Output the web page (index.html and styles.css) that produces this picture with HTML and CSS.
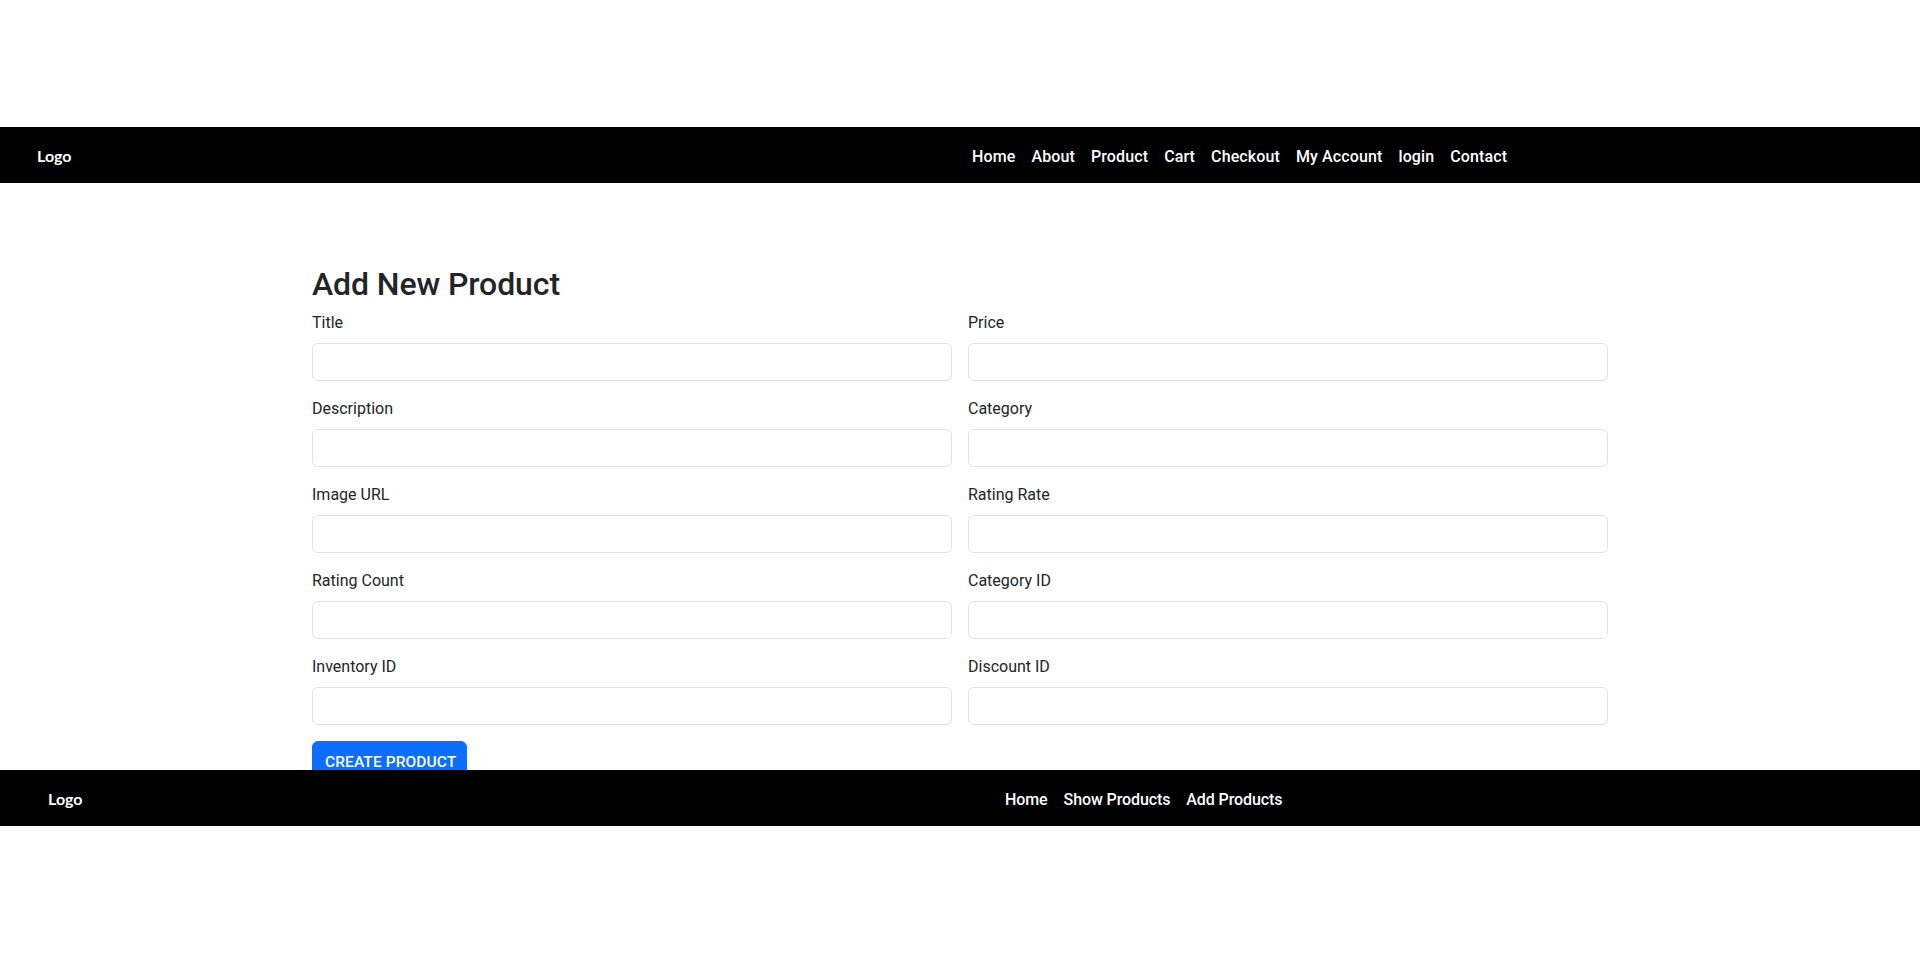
FILE: index.html
```html
<!DOCTYPE html>
<html lang="en">
<head>
<meta charset="utf-8">
<title>Add New Product</title>
<link rel="stylesheet" href="styles.css">
</head>
<body>
<div class="top-space"></div>
<header class="bar header">
  <div class="brand">Logo</div>
  <nav class="nav">
    <a href="#">Home</a>
    <a href="#">About</a>
    <a href="#">Product</a>
    <a href="#">Cart</a>
    <a href="#">Checkout</a>
    <a href="#">My Account</a>
    <a href="#">login</a>
    <a href="#">Contact</a>
  </nav>
</header>
<main class="main">
  <div class="container">
    <h2 class="title">Add New Product</h2>
    <form class="form">
      <div class="grid">
        <div class="field"><label>Title</label><input type="text"></div>
        <div class="field"><label>Price</label><input type="text"></div>
        <div class="field"><label>Description</label><input type="text"></div>
        <div class="field"><label>Category</label><input type="text"></div>
        <div class="field"><label>Image URL</label><input type="text"></div>
        <div class="field"><label>Rating Rate</label><input type="text"></div>
        <div class="field"><label>Rating Count</label><input type="text"></div>
        <div class="field"><label>Category ID</label><input type="text"></div>
        <div class="field"><label>Inventory ID</label><input type="text"></div>
        <div class="field"><label>Discount ID</label><input type="text"></div>
      </div>
      <button type="button" class="btn">CREATE PRODUCT</button>
    </form>
  </div>
</main>
<footer class="bar footer">
  <div class="brand">Logo</div>
  <nav class="nav">
    <a href="#">Home</a>
    <a href="#">Show Products</a>
    <a href="#">Add Products</a>
  </nav>
</footer>
</body>
</html>
```

FILE: styles.css
```css
* { box-sizing: border-box; }
html, body { margin: 0; padding: 0; background: #fff; }
body {
  font-family: Roboto, "Liberation Sans", sans-serif;
  color: #212529;
  font-size: 16px;
  line-height: 1.5;
}
.top-space { height: 127px; }
.bar {
  background: #000;
  height: 56px;
  display: grid;
  grid-template-columns: 1fr 1fr;
  align-items: center;
}
.brand {
  font-family: Lato, "Open Sans", sans-serif;
  font-weight: 700;
  font-size: 16px;
  color: #fff;
  padding-top: 1px;
}
.header .brand { padding-left: 37px; }
.footer .brand { padding-left: 48px; }
.nav { display: flex; }
.header .nav { padding-left: 4px; }
.footer .nav { padding-left: 37px; }
.nav a {
  color: #fff;
  text-decoration: none;
  font-weight: 500;
  font-size: 16px;
  padding: 10px 8px 6px;
  line-height: 24px;
  letter-spacing: 0.12px;
}
.footer .nav a { letter-spacing: -0.1px; }
.main {
  height: 587px;
  overflow: hidden;
}
.container {
  width: 1296px;
  margin: 0 auto;
  padding-top: 82px;
}
.title {
  margin: 0 0 8px;
  font-size: 32px;
  line-height: 1.2;
  font-weight: 500;
  letter-spacing: -0.1px;
}
.grid {
  display: grid;
  grid-template-columns: 1fr 1fr;
  column-gap: 16px;
  row-gap: 16px;
}
.field { display: flex; flex-direction: column; }
.field label {
  display: block;
  margin-bottom: 8px;
  padding-top: 1px;
  margin-top: -1px;
  font-size: 16px;
  line-height: 24px;
}
.field input {
  height: 38px;
  border: 1px solid #dee2e6;
  border-radius: 6px;
  padding: 6px 12px;
  font: inherit;
  background: #fff;
}
.btn {
  margin-top: 16px;
  background: #0d6efd;
  color: #fff;
  border: 1px solid #0d6efd;
  border-radius: 6px;
  padding: 8px 12px 4px;
  height: 38px;
  width: 155px;
  font-family: Roboto, sans-serif;
  font-size: 15.5px;
  font-weight: 500;
  letter-spacing: 0.1px;
  line-height: 24px;
  white-space: nowrap;
  text-align: left;
}
```
